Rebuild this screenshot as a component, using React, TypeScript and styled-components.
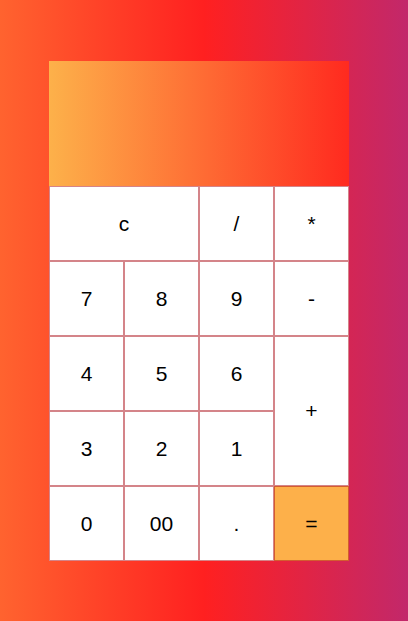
import styled, { createGlobalStyle } from 'styled-components';

const GlobalStyle = createGlobalStyle`
  html, body {
    margin: 0;
    padding: 0;
  }
  body {
    font-family: "Liberation Sans", Arial, sans-serif;
  }
`;

const Page = styled.div`
  min-height: 100vh;
  box-sizing: border-box;
  padding: 61px 0 0 49px;
  background: linear-gradient(to right, #ff632f 0%, #ff2020 50%, #c2286a 100%);
`;

const Calculator = styled.div`
  width: 300px;
  display: flex;
  flex-direction: column;
`;

const Display = styled.div`
  height: 125px;
  background: linear-gradient(to right, #fdb14a, #ff2a1f);
`;

const Keys = styled.div`
  display: grid;
  grid-template-columns: repeat(4, 75px);
  grid-auto-rows: 75px;
`;

const Key = styled.button<{ $cols?: number; $rows?: number; $accent?: boolean }>`
  box-sizing: border-box;
  grid-column: span ${(p) => p.$cols ?? 1};
  grid-row: span ${(p) => p.$rows ?? 1};
  display: flex;
  align-items: center;
  justify-content: center;
  margin: 0;
  padding: 0;
  border: 1px solid rgba(170, 10, 20, 0.5);
  background: ${(p) => (p.$accent ? '#fdb04a' : '#fff')};
  color: #000;
  font-family: "Liberation Sans", Arial, sans-serif;
  font-size: 21px;
  cursor: pointer;
`;

const keys: { label: string; cols?: number; rows?: number; accent?: boolean }[] = [
  { label: 'c', cols: 2 },
  { label: '/' },
  { label: '*' },
  { label: '7' },
  { label: '8' },
  { label: '9' },
  { label: '-' },
  { label: '4' },
  { label: '5' },
  { label: '6' },
  { label: '+', rows: 2 },
  { label: '3' },
  { label: '2' },
  { label: '1' },
  { label: '0' },
  { label: '00' },
  { label: '.' },
  { label: '=', accent: true },
];

export default function App() {
  return (
    <>
      <GlobalStyle />
      <Page>
        <Calculator>
          <Display />
          <Keys>
            {keys.map((k) => (
              <Key key={k.label} $cols={k.cols} $rows={k.rows} $accent={k.accent}>
                {k.label}
              </Key>
            ))}
          </Keys>
        </Calculator>
      </Page>
    </>
  );
}
